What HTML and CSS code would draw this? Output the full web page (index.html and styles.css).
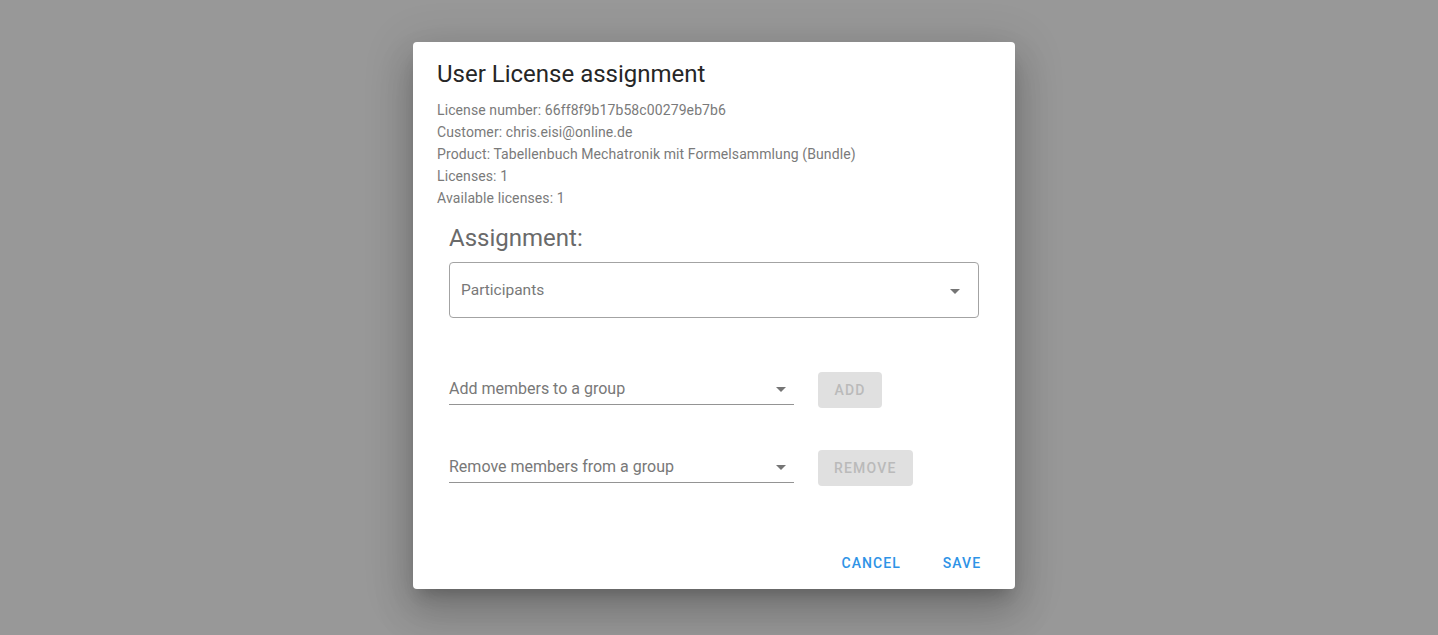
FILE: index.html
```html
<!DOCTYPE html>
<html>
<head>
<meta charset="utf-8">
<link rel="stylesheet" href="styles.css">
</head>
<body>
<div class="backdrop">
  <div class="dialog">
    <h2 class="dialog-title">User License assignment</h2>
    <div class="info">
      <div>License number: 66ff8f9b17b58c00279eb7b6</div>
      <div>Customer: chris.eisi@online.de</div>
      <div>Product: Tabellenbuch Mechatronik mit Formelsammlung (Bundle)</div>
      <div>Licenses: 1</div>
      <div>Available licenses: 1</div>
    </div>
    <div class="assignment">
      <div class="assign-heading">Assignment:</div>
      <div class="outlined-select">
        <span class="placeholder">Participants</span>
        <svg class="arrow" viewBox="0 0 24 24" width="24" height="24"><path d="M7 10l5 5 5-5z"/></svg>
      </div>
      <div class="group-row row-add">
        <div class="std-select">
          <span class="placeholder">Add members to a group</span>
          <svg class="arrow" viewBox="0 0 24 24" width="24" height="24"><path d="M7 10l5 5 5-5z"/></svg>
        </div>
        <button class="btn-disabled">ADD</button>
      </div>
      <div class="group-row row-remove">
        <div class="std-select">
          <span class="placeholder">Remove members from a group</span>
          <svg class="arrow" viewBox="0 0 24 24" width="24" height="24"><path d="M7 10l5 5 5-5z"/></svg>
        </div>
        <button class="btn-disabled">REMOVE</button>
      </div>
    </div>
    <div class="actions">
      <button class="btn-text">CANCEL</button>
      <button class="btn-text">SAVE</button>
    </div>
  </div>
</div>
</body>
</html>
```
FILE: styles.css
```css
* { box-sizing: border-box; }
html, body {
  margin: 0;
  padding: 0;
  height: 635px;
  overflow: hidden;
  background: #989898;
  font-family: Roboto, "Liberation Sans", sans-serif;
}
.backdrop {
  height: 635px;
  padding: 42px 0 0 413px;
}
.dialog {
  width: 602px;
  height: 547px;
  background: #fff;
  border-radius: 4px;
  box-shadow: 0 11px 15px -7px rgba(0,0,0,0.2), 0 24px 38px 3px rgba(0,0,0,0.14), 0 9px 46px 8px rgba(0,0,0,0.12);
  display: flex;
  flex-direction: column;
  padding: 0 24px;
}
.dialog-title {
  margin: 0;
  padding-top: 16px;
  font-size: 24px;
  line-height: 32px;
  font-weight: 400;
  color: #262626;
}
.info {
  margin-top: 9px;
  font-size: 14px;
  line-height: 22px;
  letter-spacing: 0.1px;
  color: #7a7a7a;
}
.assignment {
  padding: 0 12px;
  margin-top: 13px;
}
.assign-heading {
  font-size: 24px;
  line-height: 32px;
  color: #6a6a6a;
}
.outlined-select {
  margin-top: 8px;
  height: 56px;
  border: 1px solid #a3a3a3;
  border-radius: 4px;
  display: flex;
  align-items: center;
  justify-content: space-between;
  padding: 0 11px 0 11px;
}
.placeholder {
  font-size: 16px;
  color: #787878;
}
.outlined-select .placeholder { font-size: 15.5px; }
.arrow {
  fill: rgba(0,0,0,0.54);
  display: block;
}
.outlined-select .arrow { margin-top: 2px; }
.group-row {
  display: flex;
  align-items: flex-start;
  gap: 24px;
}
.row-add { margin-top: 55px; }
.row-remove { margin-top: 43px; }
.std-select {
  width: 345px;
  height: 32px;
  border-bottom: 1px solid #949494;
  display: flex;
  justify-content: space-between;
  padding-top: 6px;
  line-height: 19px;
}
.std-select .arrow { margin-top: -2px; margin-right: 1px; }
.btn-disabled {
  font-family: inherit;
  min-width: 64px;
  height: 36px;
  margin-top: -1px;
  padding: 0 16px;
  border: none;
  border-radius: 4px;
  background: #e0e0e0;
  color: #bababa;
  font-size: 14px;
  font-weight: 500;
  letter-spacing: 1.2px;
}
.actions {
  margin-top: auto;
  margin-right: -3px;
  padding: 8px 0;
  display: flex;
  justify-content: flex-end;
  gap: 21px;
}
.btn-text {
  font-family: inherit;
  min-width: 64px;
  height: 36.5px;
  padding: 6px 8px;
  border: none;
  background: transparent;
  color: #2e93e6;
  font-size: 14px;
  font-weight: 500;
  line-height: 24.5px;
  letter-spacing: 1.1px;
}
```
